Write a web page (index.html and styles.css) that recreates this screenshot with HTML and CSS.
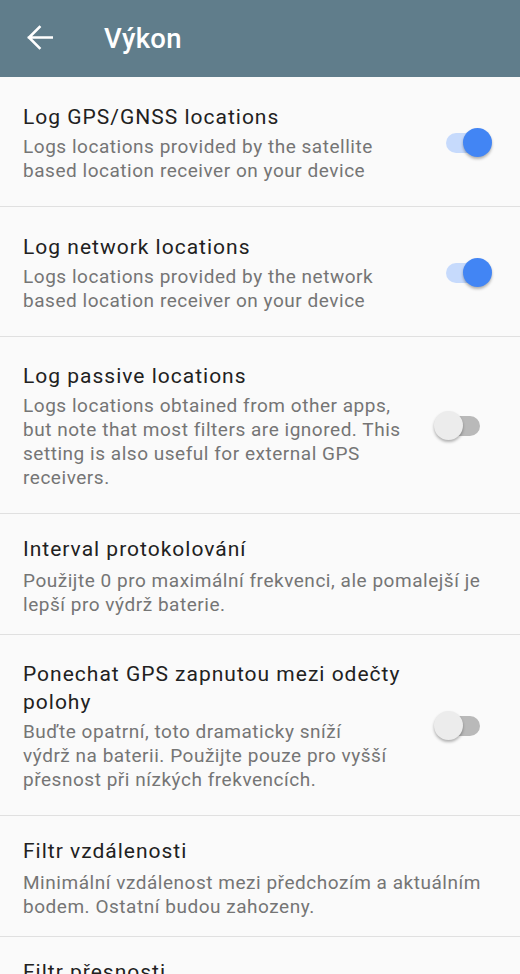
FILE: index.html
```html
<!DOCTYPE html>
<html lang="cs">
<head>
<meta charset="utf-8">
<link rel="stylesheet" href="styles.css">
</head>
<body>
<header class="appbar">
  <svg class="back" width="26" height="26" viewBox="0 0 26 26"><path d="M2 12.5H25M12.5 2L2 12.5L12.5 23" fill="none" stroke="#fff" stroke-width="2.6" stroke-linecap="square"/></svg>
  <h1 class="appbar-title">Výkon</h1>
</header>
<main class="list">
  <div class="pref pref-switch">
    <div class="pref-text">
      <div class="pref-title">Log GPS/GNSS locations</div>
      <div class="pref-summary">Logs locations provided by the satellite based location receiver on your device</div>
    </div>
    <div class="switch on"><span class="track"></span><span class="thumb"></span></div>
  </div>
  <div class="pref pref-switch">
    <div class="pref-text">
      <div class="pref-title">Log network locations</div>
      <div class="pref-summary">Logs locations provided by the network based location receiver on your device</div>
    </div>
    <div class="switch on"><span class="track"></span><span class="thumb"></span></div>
  </div>
  <div class="pref pref-switch">
    <div class="pref-text">
      <div class="pref-title">Log passive locations</div>
      <div class="pref-summary">Logs locations obtained from other apps, but note that most filters are ignored. This setting is also useful for external GPS receivers.</div>
    </div>
    <div class="switch"><span class="track"></span><span class="thumb"></span></div>
  </div>
  <div class="pref pref-plain">
    <div class="pref-text">
      <div class="pref-title">Interval protokolování</div>
      <div class="pref-summary">Použijte 0 pro maximální frekvenci, ale pomalejší je lepší pro výdrž baterie.</div>
    </div>
  </div>
  <div class="pref pref-switch">
    <div class="pref-text">
      <div class="pref-title">Ponechat GPS zapnutou mezi odečty polohy</div>
      <div class="pref-summary pref-summary-narrow">Buďte opatrní, toto dramaticky sníží výdrž na baterii. Použijte pouze pro vyšší přesnost při nízkých frekvencích.</div>
    </div>
    <div class="switch"><span class="track"></span><span class="thumb"></span></div>
  </div>
  <div class="pref pref-plain">
    <div class="pref-text">
      <div class="pref-title">Filtr vzdálenosti</div>
      <div class="pref-summary">Minimální vzdálenost mezi předchozím a aktuálním bodem. Ostatní budou zahozeny.</div>
    </div>
  </div>
  <div class="pref pref-plain">
    <div class="pref-text">
      <div class="pref-title">Filtr přesnosti</div>
      <div class="pref-summary">Záznamy s horší přesností budou zahozeny.</div>
    </div>
  </div>
</main>
</body>
</html>
```
FILE: styles.css
```css
* { box-sizing: border-box; }
html, body { margin: 0; padding: 0; }
body {
  background: #fafafa;
  font-family: Roboto, "Noto Sans", sans-serif;
  width: 520px;
  height: 974px;
  overflow: hidden;
}
.appbar {
  height: 77px;
  background: #607d8b;
  display: flex;
  align-items: center;
  padding-left: 27px;
}
.back { width: 26px; height: 26px; flex: none; margin-top: -2px; }
.appbar-title {
  margin: 0 0 0 51px;
  color: #fff;
  font-size: 27.5px;
  font-weight: 500;
  letter-spacing: 0.3px;
}
.list { display: flex; flex-direction: column; }
.pref {
  display: flex;
  align-items: center;
  border-bottom: 1px solid #e0e0e0;
}
.pref-switch { padding: 25px 28px 23px 23px; min-height: 130px; }
.pref-plain { padding: 21px 23px 17px 23px; }
.pref-switch .pref-text { width: 388px; flex: none; }
.pref-plain .pref-text { flex: 1; }
.pref-title {
  font-size: 21px;
  line-height: 28px;
  letter-spacing: 1px;
  color: #212121;
}
.pref-summary {
  font-size: 19px;
  line-height: 24px;
  letter-spacing: 0.53px;
  color: #757575;
  margin-top: 4px;
}
.pref-summary-narrow { max-width: 368px; }
.pref-plain .pref-summary { margin-top: 6px; }
.switch {
  position: relative;
  width: 58px;
  height: 30px;
  margin-left: auto;
  flex: none;
}
.switch .track {
  position: absolute;
  left: 6px;
  top: 5px;
  width: 40px;
  height: 20px;
  border-radius: 10px;
  background: #b9b9b9;
}
.switch .thumb {
  position: absolute;
  left: 0;
  top: 0;
  width: 29px;
  height: 29px;
  border-radius: 50%;
  background: #ececec;
  box-shadow: 0 2px 3px rgba(0,0,0,0.3);
}
.switch.on .track { background: #c6dafc; left: 12px; }
.switch.on .thumb { left: 29px; background: #4285f4; }
```
